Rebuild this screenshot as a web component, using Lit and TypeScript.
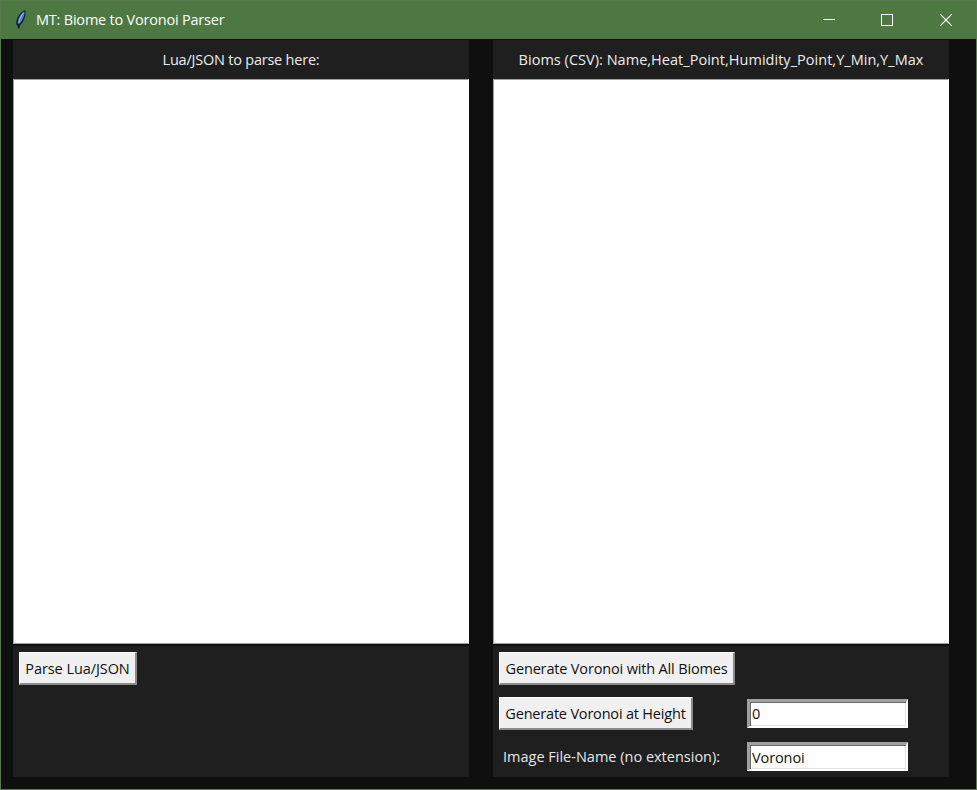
import { LitElement, html, css } from "lit";
import { customElement } from "lit/decorators.js";

@customElement("app-root")
export class AppRoot extends LitElement {
  static styles = css`
    :host {
      display: block;
      width: 977px;
      height: 790px;
      font-family: "Open Sans", "Noto Sans", sans-serif;
      font-size: 14.5px;
      line-height: 20px;
    }
    * { box-sizing: border-box; }
    .window {
      height: 100%;
      display: flex;
      flex-direction: column;
      background: #0f0f0f;
      border: 1px solid #577a4c;
    }
    .titlebar {
      flex: none;
      height: 38px;
      display: flex;
      align-items: center;
      background: #4d7842;
      color: #fff;
    }
    .feather { width: 16px; height: 20px; margin: 0 7px 2px 12px; display: block; }
    .title { flex: 1; white-space: nowrap; letter-spacing: -0.21px; }
    .controls { display: flex; }
    .controls svg { width: 58px; height: 38px; display: block; }
    .body { flex: 1; display: flex; gap: 24px; padding: 1px 0 0 12px; }
    .column { width: 456px; display: flex; flex-direction: column; }
    .heading {
      height: 39px;
      background: #1f1f1f;
      color: #ececec;
      display: flex;
      justify-content: center;
      align-items: center;
      padding-top: 1px;
      white-space: nowrap;
    }
    .source { letter-spacing: -0.22px; }
    .biomes { letter-spacing: 0.03px; }
    .text {
      display: block;
      width: 100%;
      height: 565px;
      margin: 0;
      padding: 1px;
      resize: none;
      outline: 0;
      border: 1px solid;
      border-color: #a0a0a0 #fff #a0a0a0 #a0a0a0;
      border-radius: 0;
      background: #fff;
    }
    .actions {
      height: 131px;
      margin-top: 2px;
      background: #1f1f1f;
      padding: 6px 0 0 6px;
    }
    .row { display: flex; height: 45px; align-items: flex-start; }
    .row.height { height: 44px; }
    .row.height .entry { margin-top: 2px; padding-bottom: 2px; }
    .lead { width: 248px; flex: none; display: flex; white-space: nowrap; }
    .btn {
      font: inherit;
      height: 33px;
      padding: 1px 0 0;
      color: #111;
      background: #f0f0f0;
      border: solid;
      border-width: 1px 2px 2px 1px;
      border-color: #fff #8a8a8a #8a8a8a #fff;
      white-space: nowrap;
    }
    .parse { width: 118px; letter-spacing: -0.07px; }
    .all { width: 236px; letter-spacing: -0.16px; }
    .at { width: 194px; letter-spacing: -0.19px; }
    .caption { color: #e6e6e6; padding: 6px 0 0 4px; }
    .entry {
      font: inherit;
      letter-spacing: -0.1px;
      width: 161px;
      height: 29px;
      margin-top: 1px;
      padding: 0 0 0 2px;
      color: #111;
      background: #fff;
      border: solid;
      border-color: #a0a0a0 #fff #fff #a0a0a0;
      border-width: 3px 2px 2px 3px;
      border-radius: 0;
      outline: 0;
      box-shadow: inset 1px 1px 0 #696969, inset -1px -1px 0 #e3e3e3;
    }
  `;

  render() {
    return html`
      <div class="window">
        <div class="titlebar">
          <svg class="feather" viewBox="0 0 16 20">
            <path d="M4.5 19.5 5 18 3.2 15C3 9 7 3 12.3 1 13.3 6 11.5 12 7 16.5L6.5 19.5Z" fill="#172238"/>
            <path d="M5 14C5 9 8 4.5 11.3 2.5 12 6 10 10.5 6.5 14.5Z" fill="#4a83cc"/>
            <path d="M5.8 14.5C6.5 10 8 6.5 10.5 4" stroke="#9cc6f2" fill="none"/>
          </svg>
          <span class="title">MT: Biome to Voronoi Parser</span>
          <div class="controls">
            <svg viewBox="0 0 58 38"><path d="M21 18.5H33" stroke="#fff"/></svg>
            <svg viewBox="0 0 58 38"><rect x="21.5" y="13.5" width="11" height="11" stroke="#fff" fill="none"/></svg>
            <svg viewBox="0 0 58 38"><path d="M22.2 13.2 33.8 24.8M33.8 13.2 22.2 24.8" stroke="#fff" stroke-width="1.2" fill="none"/></svg>
          </div>
        </div>
        <div class="body">
          <section class="column">
            <div class="heading"><span class="source">Lua/JSON to parse here:</span></div>
            <textarea class="text"></textarea>
            <div class="actions">
              <div class="row"><button class="btn parse">Parse Lua/JSON</button></div>
            </div>
          </section>
          <section class="column">
            <div class="heading"><span class="biomes">Bioms (CSV): Name,Heat_Point,Humidity_Point,Y_Min,Y_Max</span></div>
            <textarea class="text"></textarea>
            <div class="actions">
              <div class="row"><button class="btn all">Generate Voronoi with All Biomes</button></div>
              <div class="row height">
                <div class="lead"><button class="btn at">Generate Voronoi at Height</button></div>
                <input class="entry" .value=${"0"} />
              </div>
              <div class="row">
                <div class="lead"><span class="caption">Image File-Name (no extension):</span></div>
                <input class="entry" .value=${"Voronoi"} />
              </div>
            </div>
          </section>
        </div>
      </div>
    `;
  }
}
